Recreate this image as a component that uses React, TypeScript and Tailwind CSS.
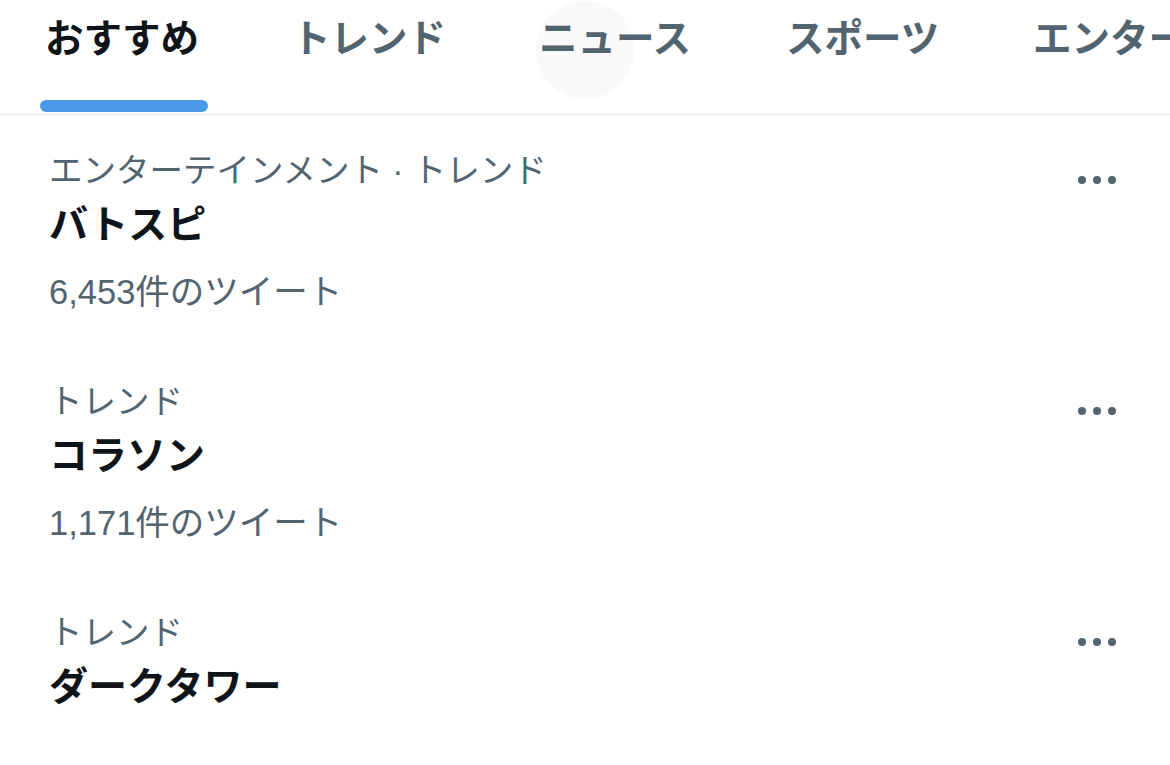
const tabs = ['おすすめ', 'トレンド', 'ニュース', 'スポーツ', 'エンターテインメント'];

const trends = [
  { category: 'エンターテインメント · トレンド', title: 'バトスピ', count: '6,453件のツイート' },
  { category: 'トレンド', title: 'コラソン', count: '1,171件のツイート' },
  { category: 'トレンド', title: 'ダークタワー', count: '' },
];

function Dots() {
  return (
    <div className="flex gap-[7px] pt-[30px]">
      <span className="block w-[8px] h-[8px] rounded-full bg-[#536471]" />
      <span className="block w-[8px] h-[8px] rounded-full bg-[#536471]" />
      <span className="block w-[8px] h-[8px] rounded-full bg-[#536471]" />
    </div>
  );
}

export default function App() {
  return (
    <div
      className="w-[1170px] h-[765px] bg-white overflow-hidden"
      style={{ fontFamily: '"Liberation Sans", "Noto Sans CJK JP", sans-serif' }}
    >
      <div className="relative flex gap-[88px] pl-[40px] border-b-[3px] border-[#eff3f4] overflow-hidden whitespace-nowrap">
        <div className="absolute left-[536px] top-[1px] w-[98px] h-[98px] rounded-full bg-[#f9f9f9]" />
        {tabs.map((t, i) => (
          <div key={t} className="relative flex flex-col items-start pt-[11px] pb-[1px] shrink-0">
            <span
              className={`pl-[5px] text-[38.5px] leading-[56px] font-bold ${i === 0 ? 'text-[#0f1419]' : 'text-[#536471]'}`}
            >
              {t}
            </span>
            <div
              className={`mt-[33px] h-[12px] w-[168px] -mr-[9px] rounded-full ${i === 0 ? 'bg-[#4a99e9]' : 'bg-transparent'}`}
            />
          </div>
        ))}
      </div>

      <div className="flex flex-col">
        {trends.map((tr) => (
          <div key={tr.title} className="flex justify-between pl-[49px] pr-[54px] pt-[30px] pb-[31px]">
            <div className="flex flex-col">
              <span className="text-[33.5px] leading-[50px] text-[#536471]">{tr.category}</span>
              <span className="text-[39px] leading-[58px] font-bold text-[#0f1419]">{tr.title}</span>
              {tr.count && (
                <span className="mt-[14px] text-[34.5px] leading-[48px] text-[#536471]">{tr.count}</span>
              )}
            </div>
            <Dots />
          </div>
        ))}
      </div>
    </div>
  );
}
